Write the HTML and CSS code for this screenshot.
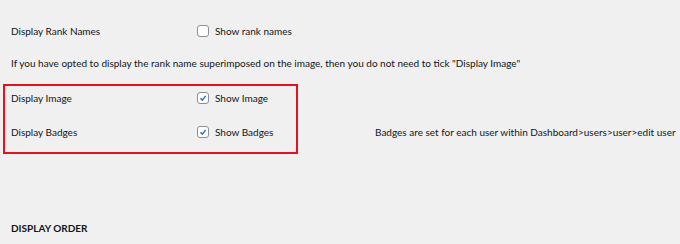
FILE: index.html
```html
<!DOCTYPE html>
<html lang="en">
<head>
    <meta charset="UTF-8">
    <title>Rank settings</title>
    <link rel="stylesheet" href="styles.css">
</head>
<body>
<div class="settings">
    <div class="row">
        <span class="field">Display Rank Names</span>
        <label class="check"><span class="box"></span>Show rank names</label>
    </div>

    <p class="note">If you have opted to display the rank name superimposed on the image, then you do not need to tick "Display Image"</p>

    <div class="highlight">
        <div class="row">
            <span class="field">Display Image</span>
            <label class="check"><span class="box checked"><svg viewBox="0 0 12 12"><path d="M3 6.2 L5.2 8.6 L9.2 3.4" /></svg></span>Show Image</label>
        </div>
        <div class="row row-gap">
            <span class="field">Display Badges</span>
            <label class="check"><span class="box checked"><svg viewBox="0 0 12 12"><path d="M3 6.2 L5.2 8.6 L9.2 3.4" /></svg></span>Show Badges</label>
            <span class="hint">Badges are set for each user within Dashboard&gt;users&gt;user&gt;edit user</span>
        </div>
    </div>

    <h3 class="section">DISPLAY ORDER</h3>
</div>
</body>
</html>
```

FILE: styles.css
```css
body {
    margin: 0;
    background-color: #f0f0f1;
    color: #101517;
    font-family: Lato, "Noto Sans", sans-serif;
    font-size: 10px;
    line-height: 16px;
}
.settings {
    padding: 23px 0 0 11px;
}
.row {
    display: flex;
    align-items: center;
    height: 16px;
    white-space: nowrap;
}
.row-gap {
    margin-top: 18px;
}
.field {
    width: 186px;
    flex-shrink: 0;
}
.check {
    display: flex;
    align-items: center;
    width: 178px;
    flex-shrink: 0;
}
.box {
    width: 10px;
    height: 10px;
    margin-right: 6px;
    border: 1px solid #8c8f94;
    border-radius: 3px;
    background-color: #fff;
    display: flex;
}
.box svg {
    width: 10px;
    height: 10px;
}
.box path {
    fill: none;
    stroke: #2271b1;
    stroke-width: 1.7;
}
.note {
    margin: 16px 0 0;
    white-space: nowrap;
}
.highlight {
    width: 285px;
    margin: 13px 0 0 -8px;
    padding: 4px 0 12px 6px;
    border: 2px solid #e4121f;
}
.section {
    margin: 66px 0 0;
    font-size: 10px;
    font-weight: 700;
    line-height: 16px;
}
```
